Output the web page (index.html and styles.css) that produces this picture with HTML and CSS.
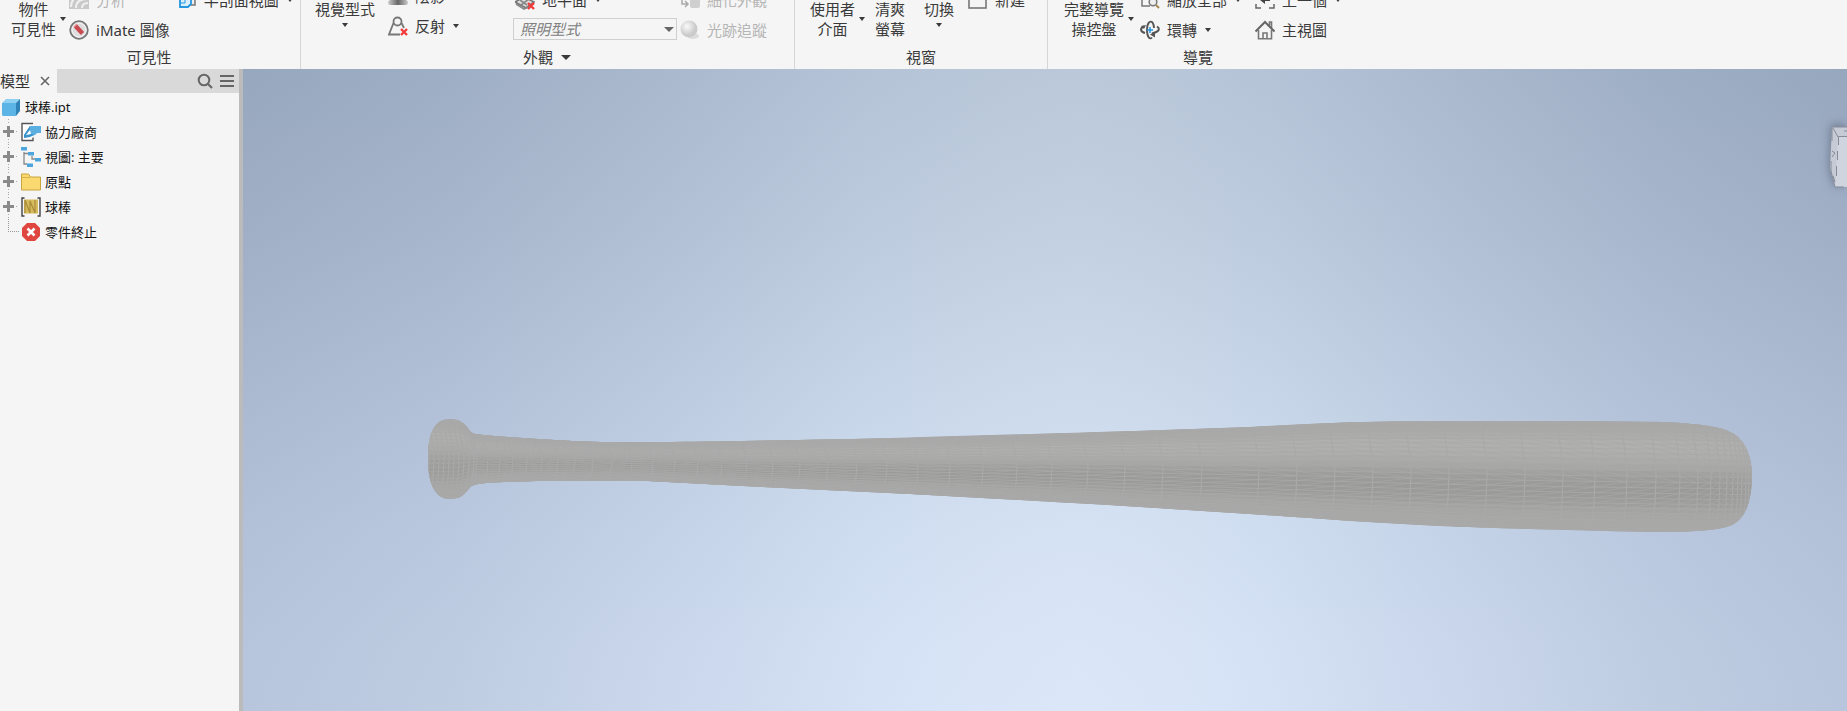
FILE: index.html
```html
<!DOCTYPE html>
<html lang="zh-Hant">
<head>
<meta charset="utf-8">
<title>球棒.ipt</title>
<link rel="stylesheet" href="styles.css">
</head>
<body>
<svg class="defs" aria-hidden="true">
  <symbol id="caret" viewBox="0 0 6 4"><path d="M0 0h6L3 4z" fill="currentColor"/></symbol>
  <symbol id="cross" viewBox="0 0 8 8"><path d="M1 1l6 6M7 1L1 7" stroke="#f23a3a" stroke-width="2.4"/></symbol>
</svg>

<header class="ribbon">
  <section class="group group-visibility" aria-label="可見性">
    <div class="controls">
      <button class="big"><span>物件<br>可見性</span><svg class="caret"><use href="#caret"/></svg></button>
      <div class="stack after-big">
        <button class="cmd" disabled>
          <svg class="icon" viewBox="0 0 20 20"><rect y="0" width="20" height="19" fill="#c9c9c9"/><path d="M2 17C2 9 8 4 18 4M7 18c0-6 4-9 11-9M13 18c0-3 2-5 6-5" fill="none" stroke="#f1f1f1" stroke-width="2"/></svg>
          <span>分析</span></button>
        <button class="cmd">
          <svg class="icon" viewBox="0 0 20 20"><circle cx="10" cy="10" r="8.8" fill="#dedede" stroke="#777" stroke-width="1.8"/><circle cx="10" cy="10" r="7" fill="none" stroke="#f6f6f6"/><path d="M6.500 6l7 7.500" stroke="#c94b50" stroke-width="4.500"/><path d="M5 7l3-3" stroke="#e58a8c" stroke-width="1.500"/></svg>
          <span>iMate 圖像</span></button>
      </div>
      <div class="stack after-imate">
        <button class="cmd">
          <svg class="icon" viewBox="0 0 20 20"><path d="M11 15h7V2h-6" fill="#eee" stroke="#777" stroke-width="1.500"/><path d="M3 8l3-3h8v9l-3 3H3z" fill="#d9effc" stroke="#2596e0" stroke-width="1.800"/><path d="M8 5v8H3" fill="none" stroke="#2596e0"/></svg>
          <span>半剖面視圖</span><svg class="caret"><use href="#caret"/></svg></button>
      </div>
    </div>
    <h2 class="group-title">可見性</h2>
  </section>

  <section class="group group-look" aria-label="外觀">
    <div class="controls">
      <button class="big below"><span>視覺型式</span><svg class="caret"><use href="#caret"/></svg></button>
      <div class="stack raised after-style">
        <button class="cmd">
          <svg class="icon" viewBox="0 0 20 20"><defs><linearGradient id="sh"><stop offset="0" stop-color="#ccc"/><stop offset=".5" stop-color="#666"/><stop offset="1" stop-color="#ccc"/></linearGradient></defs><rect x="0" y="14" width="20" height="5" rx="2.500" fill="url(#sh)"/></svg>
          <span>陰影</span></button>
        <button class="cmd">
          <svg class="icon" viewBox="0 0 20 20"><g fill="none" stroke="#777" stroke-width="1.800"><circle cx="9.500" cy="5.500" r="4"/><path d="M5.500 7L1 18.500h11M13.500 7l2.500 5"/></g><use href="#cross" x="12" y="12" width="8" height="8"/></svg>
          <span>反射</span><svg class="caret"><use href="#caret"/></svg></button>
      </div>
      <div class="stack after-reflect">
        <button class="cmd indent">
          <svg class="icon" viewBox="0 0 20 20"><path d="M0 12l9-5 10 5-8 6z" fill="#ddd" stroke="#777" stroke-width="1.600"/><path d="M1 14l8 5 4-2M5 10l7 5M14 9l-8 6" stroke="#888" fill="none" stroke-width="1.600"/><use href="#cross" x="12" y="12" width="8" height="8"/></svg>
          <span>地平面</span><svg class="caret"><use href="#caret"/></svg></button>
        <div class="select-box">
          <select class="lighting" aria-label="照明型式"><option>照明型式</option></select>
          <svg class="select-caret" viewBox="0 0 10 5"><path d="M0 0h10L5 5z" fill="#666"/></svg>
        </div>
      </div>
      <div class="stack after-select">
        <button class="cmd" disabled>
          <svg class="icon" viewBox="0 0 20 20"><rect x="10" y="6" width="10" height="12" rx="2" fill="#cfcfcf"/><path d="M2 9v5h6M5 11l3 3-3 3" fill="none" stroke="#aaa" stroke-width="1.500"/></svg>
          <span>細化外觀</span></button>
        <button class="cmd" disabled>
          <svg class="icon" viewBox="0 0 20 20"><defs><radialGradient id="ball" cx=".38" cy=".35"><stop offset="0" stop-color="#fafafa"/><stop offset="1" stop-color="#cbcbcb"/></radialGradient></defs><ellipse cx="13" cy="16" rx="6" ry="3" fill="#dcdcdc"/><circle cx="9" cy="9" r="8.500" fill="url(#ball)"/></svg>
          <span>光跡追蹤</span></button>
      </div>
    </div>
    <h2 class="group-title"><button class="title-button">外觀<svg class="title-caret" viewBox="0 0 10 5"><path d="M0 0h10L5 5z" fill="currentColor"/></svg></button></h2>
  </section>

  <section class="group group-window" aria-label="視窗">
    <div class="controls">
      <button class="big"><span>使用者<br>介面</span><svg class="caret"><use href="#caret"/></svg></button>
      <button class="big after-ui"><span>清爽<br>螢幕</span></button>
      <button class="big below after-clean"><span>切換</span><svg class="caret"><use href="#caret"/></svg></button>
      <div class="stack after-switch">
        <button class="cmd">
          <svg class="icon" viewBox="0 0 20 20"><rect x="1" y="3" width="17" height="15" fill="#f4f4f4" stroke="#777" stroke-width="1.600"/></svg>
          <span>新建</span></button>
      </div>
    </div>
    <h2 class="group-title">視窗</h2>
  </section>

  <section class="group group-navigate" aria-label="導覽">
    <div class="controls">
      <button class="big"><span>完整導覽<br>操控盤</span><svg class="caret"><use href="#caret"/></svg></button>
      <div class="stack after-wheel">
        <button class="cmd">
          <svg class="icon" viewBox="0 0 20 20"><path d="M10 16H2V3h14" fill="none" stroke="#777" stroke-width="1.500"/><circle cx="13" cy="12" r="3.800" fill="#eee" stroke="#777" stroke-width="1.500"/><path d="M16 15l3 3" stroke="#a88a50" stroke-width="2"/></svg>
          <span>縮放全部</span><svg class="caret"><use href="#caret"/></svg></button>
        <button class="cmd">
          <svg class="icon" viewBox="0 0 20 20"><g fill="none" stroke="#555" stroke-width="1.900"><path d="M12 17.500C10 20 7 17 7 10s3-10 5.500-7.500C13.500 4 14 6 14 8"/><path d="M4 6.500C-1 8.500 1 12 5 13M17 6.500c3 2 3 5-5 7"/></g><path d="M10 14.500l5-3v6z" fill="#555"/><path d="M1 6l5-1-2 4z" fill="#555"/><path d="M10 7v6M7 10h6" stroke="#2090e0" stroke-width="1.500"/></svg>
          <span>環轉</span><svg class="caret"><use href="#caret"/></svg></button>
      </div>
      <div class="stack after-orbit">
        <button class="cmd">
          <svg class="icon" viewBox="0 0 20 20"><path d="M1 14v4h5M14 18h5v-4M1 6V2h5M14 2h5v4" fill="none" stroke="#666" stroke-width="1.500"/><path d="M5 10l5-4v3h5v2h-5v3z" fill="#444"/></svg>
          <span>上一個</span><svg class="caret"><use href="#caret"/></svg></button>
        <button class="cmd">
          <svg class="icon" viewBox="0 0 20 20"><path d="M3.500 10v8.800h13V10M8 18.500V13h4v5.500M14.500 6V2h2v6" fill="none" stroke="#777" stroke-width="1.600"/><path d="M.5 11.500L10 2l9.500 9.500" fill="none" stroke="#666" stroke-width="2"/></svg>
          <span>主視圖</span></button>
      </div>
    </div>
    <h2 class="group-title">導覽</h2>
  </section>
</header>

<div class="workspace">
  <aside class="browser">
    <div class="tabs">
      <div class="tab">模型
        <button class="tool close" aria-label="關閉"><svg viewBox="0 0 10 10" width="10" height="10"><path d="M1 1l8 8M9 1L1 9" stroke="#666" stroke-width="1.600"/></svg></button>
      </div>
      <div class="tab-tools">
        <button class="tool" aria-label="搜尋"><svg viewBox="0 0 16 16" width="16" height="16"><circle cx="7" cy="7" r="5.300" fill="none" stroke="#666" stroke-width="2"/><path d="M11 11l4 4" stroke="#666" stroke-width="2.200"/></svg></button>
        <button class="tool" aria-label="功能表"><svg viewBox="0 0 14 14" width="14" height="14"><path d="M0 2h14M0 7h14M0 12h14" stroke="#666" stroke-width="2"/></svg></button>
      </div>
    </div>

    <div class="root">
      <svg class="root-icon" viewBox="0 0 18 18"><path d="M0 5l4-4h14l-4 4z" fill="#8fd0f3"/><path d="M0 5h14v13H1L0 17z" fill="#5cb3e6"/><path d="M14 5l4-4v12l-4 5z" fill="#2f83b8"/></svg>
      <span>球棒.ipt</span>
    </div>
    <ul class="tree">
      <li class="node">
        <button class="expander" aria-label="展開"></button>
        <svg class="icon" viewBox="0 0 20 20"><path d="M12 1.500H1v17h11v-3" fill="#fff" stroke="#555" stroke-width="1.400"/><path d="M9 4h11v7h-4l-2 2-5 1-6 2V13z" fill="#5aaee0"/><path d="M9 4v4l-4 5 5-1 3 1-4 2-6 1v-3z" fill="#3c93cc"/><path d="M9 8l-4 5 5-1z" fill="#fff"/></svg>
        <span>協力廠商</span></li>
      <li class="node">
        <button class="expander" aria-label="展開"></button>
        <svg class="icon" viewBox="0 0 20 20"><path d="M3 5v12h3M3 6.500h5M11 9v3h4" fill="none" stroke="#888" stroke-width="1.300"/><path d="M0 0h6v3.500H0zM7 5h6v3.500H7zM14 11h6v3.500h-6zM6 16.500h6V20H6z" fill="#4ca5dd"/></svg>
        <span>視圖: 主要</span></li>
      <li class="node">
        <button class="expander" aria-label="展開"></button>
        <svg class="icon" viewBox="0 0 20 20"><path d="M.5 18V2h7l2 3h10v13z" fill="#f9d970" stroke="#c9a53e"/><path d="M1 5.500h8" stroke="#d5b24c"/></svg>
        <span>原點</span></li>
      <li class="node">
        <button class="expander" aria-label="展開"></button>
        <svg class="icon" viewBox="0 0 20 20"><path d="M3.500 1H1v18h2.500M16.500 1H19v18h-2.500" fill="none" stroke="#444" stroke-width="1.400"/><path d="M3 2.500h14v14H3z" fill="#d8bb5c"/><path d="M4 3v13M4 3l5 13V4l5 12V3" fill="none" stroke="#a88c3b" stroke-width="1.200"/></svg>
        <span>球棒</span></li>
      <li class="node last">
        <span class="elbow"></span>
        <svg class="icon" viewBox="0 0 20 20"><path d="M6 1h8l5 5v8l-5 5H6l-5-5V6z" fill="#e04640"/><path d="M6.500 6.500l7 7M13.500 6.500l-7 7" stroke="#fff" stroke-width="2.600"/></svg>
        <span>零件終止</span></li>
    </ul>
  </aside>

  <main class="viewport">
    <svg class="scene" viewBox="243 69 1604 642" role="img" aria-label="球棒">
      <defs>
        <clipPath id="bat">
          <path d="M428 458C428 434 434 419 450 419C458 419 463 422 467 427C470 431 471 433 475 434C490 436 530 439 572 441C610 443 660 442 720 441.500C780 440 840 439.500 910 437.500C1030 434 1140 431 1250 427C1320 423 1370 421 1440 421H1575L1664 422C1700 424 1726 426 1738 437C1750 448 1752 465 1752 478C1751 500 1747 517 1732 525C1718 531 1690 532 1650 532C1560 530 1490 528 1440 526C1370 523 1310 518 1250 514C1130 506 1020 500 910 494L743 486L648 481H537C500 482 485 482 474 485C470 486 469 489 466 492C462 497 457 499 450 499C434 499 428 482 428 458Z"/>
        </clipPath>
      </defs>
      <g id="mesh" clip-path="url(#bat)"><path d="M420 410h1340v130H420z" fill="#a8a8a7"/></g>
    </svg>
    <button class="view-cube" aria-label="檢視方塊">
      <svg viewBox="0 0 17 62" width="17" height="62"><path d="M2 1h15v60H5L0 42z" fill="#c5cad5"/><path d="M8 11h9v50H5z" fill="#cfd4df"/><path d="M2 1h15M17 5h-3M3 2l5 9M17 10.500H8.500V19M7.500 25v9M6.500 40v10M2 1v14M2 25l3 2-3 4M1 35v10l4 16h9M3 50l2 6" fill="none" stroke="#858c99"/></svg>
    </button>
  </main>
</div>
<script src="mesh.js"></script>
</body>
</html>
```
FILE: styles.css
```css
* { box-sizing: border-box; }

body {
  margin: 0;
  height: 100vh;
  display: flex;
  flex-direction: column;
  overflow: hidden;
  background: #f5f5f5;
  color: #3a3a3a;
  font: 15px/20px "Noto Sans", "Noto Sans CJK TC", sans-serif;
}

button {
  border: 0;
  padding: 0;
  background: none;
  color: inherit;
  font: inherit;
}

button:disabled { color: #b5b5b5; }

.defs { position: absolute; width: 0; height: 0; }
.icon { width: 20px; height: 20px; flex: none; }
.caret { width: 6px; height: 4px; flex: none; }

/* Ribbon: rolled up so that only its lower part shows */
.ribbon {
  flex: none;
  display: flex;
  height: 69px;
  overflow: hidden;
}

.group {
  flex: none;
  display: flex;
  flex-direction: column;
  justify-content: flex-end;
  border-right: 1px solid #d6d6d6;
}

.group-visibility { min-width: 301px; padding-left: 11px; }
.group-look { min-width: 494px; padding-left: 14px; }
.group-window { min-width: 253px; padding-left: 15px; }
.group-navigate { min-width: 300px; padding-left: 16px; border-right: 0; }

.controls { display: flex; align-items: flex-end; }

.group-title {
  margin: 0;
  height: 24px;
  font-size: 15px;
  font-weight: 400;
  line-height: 24px;
  text-align: center;
}

.group-visibility .group-title { margin-left: -13px; }
.group-look .group-title { margin-left: -15px; }
.group-window .group-title { margin-left: -15px; }
.group-navigate .group-title { margin-left: -16px; }

.title-button { display: inline-flex; align-items: center; gap: 8px; }
.title-caret { width: 10px; height: 5px; }

.big {
  display: flex;
  align-items: center;
  gap: 4px;
  margin-bottom: 6px;
  text-align: center;
  white-space: nowrap;
}

.big.below { flex-direction: column; margin-bottom: 18px; }

.stack { height: 60px; display: flex; flex-direction: column; }
.raised { margin-bottom: 4px; }

.cmd {
  height: 30px;
  display: flex;
  align-items: center;
  gap: 7px;
  white-space: nowrap;
}

.cmd .caret { margin-left: 1px; }
.indent { margin-left: 2px; }

.after-big { margin-left: 3px; }
.after-imate { margin-left: 7px; }
.after-style { margin-left: 13px; }
.after-reflect { margin-left: 54px; }
.after-select { margin-left: 3px; }
.after-ui { margin-left: 10px; }
.after-clean { margin-left: 19px; }
.after-switch { margin-left: 14px; }
.after-wheel { margin-left: 6px; }
.after-orbit { margin-left: 14px; }

.select-box { display: grid; width: 164px; height: 22px; margin-top: 3px; }
.select-box > * { grid-area: 1 / 1; }

.lighting {
  appearance: none;
  margin: 0;
  padding: 0 6px;
  border: 1px solid #cfcfcf;
  border-radius: 0;
  background: #f5f5f5;
  color: #808080;
  font: inherit;
  font-style: italic;
}

.select-caret {
  width: 10px;
  height: 5px;
  margin-right: 3px;
  place-self: center end;
  pointer-events: none;
}

/* Workspace */
.workspace { flex: 1; display: flex; min-height: 0; }

.browser {
  flex: none;
  width: 243px;
  border-right: 4px solid #bbb;
  color: #111;
  font-size: 13px;
}

.tabs { display: flex; height: 24px; background: #d9d9d9; }

.tab {
  display: flex;
  align-items: center;
  gap: 10px;
  width: 57px;
  background: #f5f5f5;
  color: #333;
  font-size: 15px;
  white-space: nowrap;
}

.tab-tools {
  flex: 1;
  display: flex;
  justify-content: flex-end;
  align-items: center;
  gap: 7px;
  padding-right: 5px;
}

.tool { display: flex; }

.root {
  display: flex;
  align-items: center;
  gap: 5px;
  height: 25px;
  margin-top: 1px;
  padding-left: 2px;
}

.root-icon { width: 18px; height: 18px; }

.tree { margin: 0; padding: 0; list-style: none; }

.node {
  display: flex;
  align-items: center;
  height: 25px;
  padding-left: 3px;
}

.node .icon { margin: 0 4px 0 2px; }

.expander, .elbow { flex: none; width: 16px; height: 25px; }

.expander {
  background:
    linear-gradient(#8a8a8a, #8a8a8a) 0 11px / 11px 3px no-repeat,
    linear-gradient(#8a8a8a, #8a8a8a) 4px 7px / 3px 11px no-repeat,
    repeating-linear-gradient(#aaa 0 1px, transparent 1px 3px) 5px 0 / 1px 5px no-repeat,
    repeating-linear-gradient(#aaa 0 1px, transparent 1px 3px) 5px 20px / 1px 5px no-repeat,
    repeating-linear-gradient(90deg, #aaa 0 1px, transparent 1px 3px) 13px 12px / 3px 1px no-repeat;
}

.elbow {
  background:
    repeating-linear-gradient(#999 0 1px, transparent 1px 2px) 5px 0 / 1px 13px no-repeat,
    repeating-linear-gradient(90deg, #999 0 1px, transparent 1px 2px) 5px 12px / 11px 1px no-repeat;
}

/* The side darkening is subtracted from the vertical gradient */
.viewport {
  position: relative;
  flex: 1;
  min-width: 0;
  overflow: hidden;
  background:
    linear-gradient(90deg, rgb(35 33 28), rgb(28 26 22) 13%, rgb(17 16 13) 26%, rgb(6 5 4) 39%, rgb(1 1 1) 48%, rgb(0 0 0) 52%, rgb(1 1 1) 56%, rgb(6 5 4) 64%, rgb(17 16 13) 76%, rgb(28 26 22) 88%, rgb(35 33 28)),
    linear-gradient(#bac8da, #c3d0e2 25%, #cddaec 50%, #d5e2f4 72%, #dae6f8 90%, #dbe7f9);
  background-blend-mode: difference, normal;
}

.scene { display: block; width: 100%; height: 100%; }

.view-cube {
  position: absolute;
  top: 57px;
  right: 0;
  display: flex;
  filter: drop-shadow(-1px -2px 5px #6f7b90);
}
```
FILE: mesh.js
```js
// Builds the shaded, triangulated surface of the bat.
const mesh = document.getElementById("mesh");
const profile = [
  [426, 419, 499], [459, 420, 498], [466, 425, 493], [474, 433, 485],
  [540, 439, 481], [640, 442, 481], [743, 441, 486], [910, 438, 494],
  [1080, 433, 503], [1250, 427, 514], [1350, 422, 521], [1450, 421, 526],
  [1575, 421, 530], [1700, 422, 532], [1756, 424, 532]
];

function edges(x) {
  let i = 1;
  while (i < profile.length - 1 && profile[i][0] < x) i++;
  const [x0, t0, b0] = profile[i - 1];
  const [x1, t1, b1] = profile[i];
  const k = (x - x0) / (x1 - x0);
  return [t0 + (t1 - t0) * k, b0 + (b1 - b0) * k];
}

function at(x, f) {
  const [top, bottom] = edges(x);
  return `${x.toFixed(1)} ${(top + (bottom - top) * f).toFixed(1)}`;
}

function add(d, fill, stroke, width) {
  const path = document.createElementNS("http://www.w3.org/2000/svg", "path");
  path.setAttribute("d", d);
  path.setAttribute("fill", fill);
  if (stroke) path.setAttribute("stroke", stroke);
  if (width) path.setAttribute("stroke-width", width);
  mesh.append(path);
}

const xs = profile.map(p => p[0]);
const shades = [168, 170, 173, 176, 176, 174, 171, 167, 161, 157, 155, 154, 155, 158, 163, 166, 168, 168];
shades.forEach((v, i) => {
  const a = i / shades.length;
  const b = (i + 1.3) / shades.length;
  const upper = xs.map(x => at(x, a));
  const lower = xs.map(x => at(x, b)).reverse();
  add("M" + upper.concat(lower).join("L") + "Z", `rgb(${v},${v},${v - 1})`);
});

const stations = [];
for (let x = 428; x < 474; x += 5) stations.push(x);
for (let x = 476, step = 10; x < 1220; x += step) {
  stations.push(x);
  step = Math.min(step + 1, 40);
}
for (let x = 1258; x < 1590; x += 38) stations.push(x);
stations.push(1594, 1626, 1655, 1679, 1697, 1710, 1719, 1726, 1732, 1737, 1741, 1745, 1748, 1751);

const rows = [];
for (let k = 1; k < 30; k++) rows.push(0.5 - 0.5 * Math.cos(Math.PI * k / 30));

const line = "#a9a9a9";
rows.forEach(f => add("M" + xs.map(x => at(x, f)).join("L"), "none", line, 0.8));
stations.forEach((x, i) => {
  add("M" + [at(x - 5, 0), at(x, 0.35), at(x + 1, 0.5), at(x, 0.75), at(x - 3, 1)].join("L"), "none", line, 1.2);
  const next = stations[i + 1];
  if (!next) return;
  let d = "";
  for (let r = 0; r < rows.length - 1; r++) {
    d += rows[r] < 0.5
      ? `M${at(x, rows[r])}L${at(next, rows[r + 1])}`
      : `M${at(x, rows[r + 1])}L${at(next, rows[r])}`;
  }
  add(d, "none", line, 0.6);
});
```
